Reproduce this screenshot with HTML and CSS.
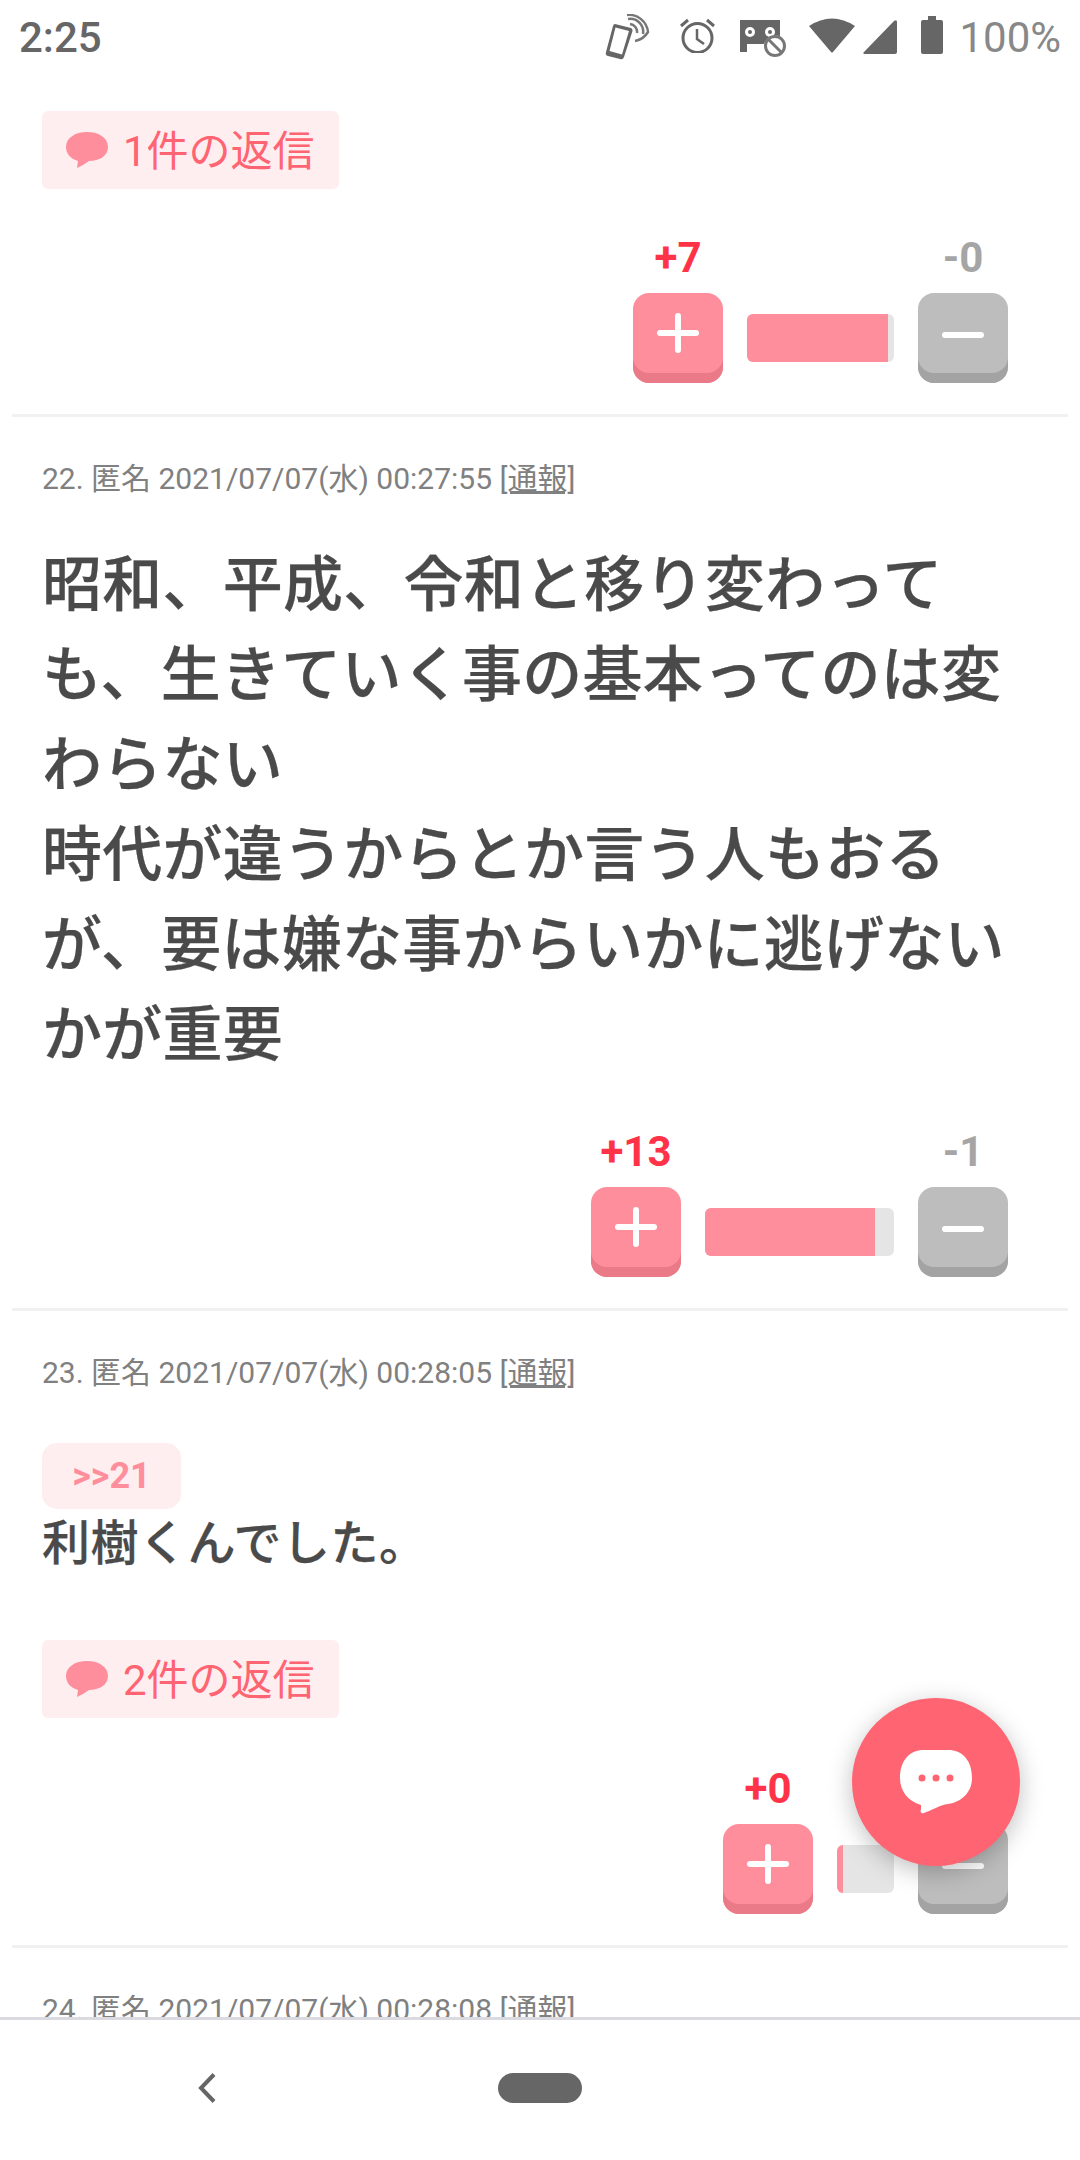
FILE: index.html
```html
<!DOCTYPE html>
<html>
<head>
  <title>コメント</title>
  <link rel="stylesheet" href="styles.css">
</head>

<body>
  <div class="phone">
    <div class="status-bar">
      <span class="time">2:25</span>
      <div class="status-icons">
        <svg class="icon-nfc" viewBox="0 0 45 47" width="45" height="47">
          <path d="M10 10 L26 14 Q28 15 27.500 17 L19 43 Q18 46 15 45 L3 42 Q0 41 1 38 L8 12 Q8.500 10 10 10 Z M10.500 13.500 L4.500 37 L17 40.500 L24 17 Z" fill="#666" fill-rule="evenodd"/>
          <path d="M23 5 A13 13 0 0 1 38 20 M22 1 A19 19 0 0 1 43 18 A19 19 0 0 1 30 27 M25 10 A8 8 0 0 1 32 19" fill="none" stroke="#777" stroke-width="2.500"/>
        </svg>
        <svg class="icon-alarm" viewBox="0 0 37 35" width="37" height="35">
          <circle cx="18.500" cy="20" r="14.500" fill="none" stroke="#666" stroke-width="3"/>
          <path d="M18 11 V21 L25 26" fill="none" stroke="#666" stroke-width="2.500"/>
          <path d="M2 8 L9 2 M35 8 L28 2" fill="none" stroke="#666" stroke-width="3"/>
        </svg>
        <svg class="icon-cast" viewBox="0 0 46 37" width="46" height="37">
          <path d="M0 0 H40 V16 A13 13 0 0 0 24 24 H7 V32 H0 Z" fill="#666"/>
          <circle cx="10" cy="12" r="5" fill="#fff"/>
          <circle cx="10" cy="12" r="2" fill="#666"/>
          <circle cx="30" cy="12" r="5" fill="#fff"/>
          <circle cx="30" cy="12" r="2" fill="#666"/>
          <circle cx="35" cy="26" r="9.500" fill="#fff" stroke="#777" stroke-width="3"/>
          <path d="M29 20 L41 32" stroke="#777" stroke-width="3"/>
        </svg>
        <svg class="icon-wifi" viewBox="0 0 46 36" width="46" height="36">
          <path d="M0 9 Q23 -6 46 9 L24 35 Q23 36 22 35 Z" fill="#666"/>
        </svg>
        <svg class="icon-signal" viewBox="0 0 34 34" width="34" height="34">
          <path d="M34 2 V32 Q34 34 32 34 H2 Q-1 34 1 32 L31 1 Q34 -1 34 2 Z" fill="#666"/>
        </svg>
        <svg class="icon-battery" viewBox="0 0 22 38" width="22" height="38">
          <path d="M7 0 H15 V4 H20 Q22 4 22 6 V36 Q22 38 20 38 H2 Q0 38 0 36 V6 Q0 4 2 4 H7 Z" fill="#666"/>
        </svg>
        <span class="battery-text">100%</span>
      </div>
    </div>

    <div class="comment-list">
      <div class="comment comment-first">
        <div class="reply-link">
          <svg class="bubble" viewBox="0 0 42 36" width="42" height="36"><path d="M21 0 C33 0 42 6 42 15 C42 24 33 29 23 29 C19 32 15 34 11 36 L12 29 C5 27 0 22 0 15 C0 6 9 0 21 0 Z"/></svg>
          <span class="reply-text">1件の返信</span>
        </div>
        <div class="vote vote-first">
          <div class="vote-col">
            <span class="count-plus">+7</span>
            <div class="vote-btn btn-plus"><span class="plus-sign"></span></div>
          </div>
          <div class="bar bar-small"><div class="bar-fill" style="width: 96%"></div></div>
          <div class="vote-col">
            <span class="count-minus">-0</span>
            <div class="vote-btn btn-minus"><span class="minus-sign"></span></div>
          </div>
        </div>
      </div>

      <div class="comment">
        <p class="comment-head">22. 匿名 2021/07/07(水) 00:27:55 <u>[通報]</u></p>
        <p class="comment-body big-text">昭和、平成、令和と移り変わっても、生きていく事の基本ってのは変わらない<br>時代が違うからとか言う人もおるが、要は嫌な事からいかに逃げないかが重要</p>
        <div class="vote">
          <div class="vote-col">
            <span class="count-plus">+13</span>
            <div class="vote-btn btn-plus"><span class="plus-sign"></span></div>
          </div>
          <div class="bar bar-large"><div class="bar-fill" style="width: 90%"></div></div>
          <div class="vote-col">
            <span class="count-minus">-1</span>
            <div class="vote-btn btn-minus"><span class="minus-sign"></span></div>
          </div>
        </div>
      </div>

      <div class="comment">
        <p class="comment-head">23. 匿名 2021/07/07(水) 00:28:05 <u>[通報]</u></p>
        <div class="anchor">&gt;&gt;21</div>
        <p class="comment-body small-text">利樹くんでした。</p>
        <div class="reply-link reply-link-second">
          <svg class="bubble" viewBox="0 0 42 36" width="42" height="36"><path d="M21 0 C33 0 42 6 42 15 C42 24 33 29 23 29 C19 32 15 34 11 36 L12 29 C5 27 0 22 0 15 C0 6 9 0 21 0 Z"/></svg>
          <span class="reply-text">2件の返信</span>
        </div>
        <div class="vote vote-third">
          <div class="vote-col">
            <span class="count-plus">+0</span>
            <div class="vote-btn btn-plus"><span class="plus-sign"></span></div>
          </div>
          <div class="bar bar-tiny"><div class="bar-fill" style="width: 10%"></div></div>
          <div class="vote-col">
            <span class="count-minus">-0</span>
            <div class="vote-btn btn-minus"><span class="minus-sign"></span></div>
          </div>
        </div>
      </div>

      <div class="comment">
        <p class="comment-head">24. 匿名 2021/07/07(水) 00:28:08 <u>[通報]</u></p>
      </div>
    </div>

    <div class="nav-bar">
      <svg class="nav-back" viewBox="0 0 18 30" width="18" height="30"><path d="M16 1.500 L3 15 L16 28.500" fill="none" stroke="#666" stroke-width="4"/></svg>
      <div class="nav-home"></div>
    </div>

    <div class="fab">
      <svg viewBox="0 0 72 64" width="72" height="64">
        <path d="M24 0 H48 C62 0 72 10 72 28 C72 42 62 52 48 54 C40 55 30 61 24 63 C21 64 20 62 21 59 L21 55 C8 51 0 41 0 28 C0 10 10 0 24 0 Z" fill="#fff"/>
        <circle cx="22" cy="28" r="3.500" fill="#ff6473"/>
        <circle cx="36" cy="28" r="3.500" fill="#ff6473"/>
        <circle cx="50" cy="28" r="3.500" fill="#ff6473"/>
      </svg>
    </div>
  </div>
</body>
</html>
```

FILE: styles.css
```css
body {
  margin: 0;
  padding: 0;
  background-color: #fff;
  font-family: Roboto, "Noto Sans CJK JP", sans-serif;
}

.phone {
  position: relative;
  display: flex;
  flex-direction: column;
  width: 1080px;
  height: 2160px;
  overflow: hidden;
}

.status-bar {
  display: flex;
  justify-content: space-between;
  align-items: center;
  height: 74px;
  padding: 0 19px;
  flex-shrink: 0;
}

.time {
  font-size: 42px;
  font-weight: 500;
  color: #666;
}

.status-icons {
  display: flex;
  align-items: center;
  height: 74px;
}

.icon-nfc {
  margin-right: 29px;
}

.icon-alarm {
  margin-right: 24px;
  margin-bottom: 3px;
}

.icon-cast {
  margin-right: 23px;
  margin-top: 3px;
}

.icon-wifi {
  margin-right: 8px;
  margin-bottom: 4px;
}

.icon-signal {
  margin-right: 24px;
}

.icon-battery {
  margin-bottom: 4px;
}

.battery-text {
  margin-left: 16px;
  font-size: 42px;
  color: #888;
}

.comment-list {
  flex: 1;
  overflow: hidden;
  padding: 0 12px;
}

.comment {
  padding: 0 30px;
  border-bottom: 3px solid #f1f1f1;
}

.comment:last-child {
  border-bottom: none;
}

.comment-first {
  padding-top: 37px;
}

.comment-head {
  margin: 0;
  padding-top: 42px;
  font-size: 30px;
  line-height: 40px;
  color: #808080;
}

.comment-body {
  margin: 0;
  color: #4a4a4a;
  font-weight: 500;
  -webkit-text-stroke: 0.25px #4a4a4a;
}

.big-text {
  margin-top: 42px;
  font-size: 60px;
  line-height: 90px;
  letter-spacing: 0.25px;
}

.small-text {
  margin-top: 2px;
  font-size: 48px;
  line-height: 66px;
  letter-spacing: 0.5px;
}

.reply-link {
  display: flex;
  align-items: center;
  width: 297px;
  height: 78px;
  box-sizing: border-box;
  padding-left: 24px;
  border-radius: 6px;
  background-color: #ffeef0;
  font-size: 42px;
  color: #ff6473;
}

.reply-text {
  margin-bottom: 5px;
}

.reply-link-second {
  margin-top: 63px;
}

.bubble {
  margin-right: 15px;
  fill: #ff8e9c;
}

.anchor {
  display: flex;
  justify-content: center;
  align-items: center;
  width: 139px;
  height: 66px;
  margin-top: 50px;
  border-radius: 15px;
  background-color: #ffeef0;
  font-size: 36px;
  font-weight: 700;
  color: #ff8e9c;
}

.vote {
  display: flex;
  justify-content: flex-end;
  align-items: flex-end;
  gap: 24px;
  margin-top: 48px;
  padding-bottom: 31px;
  padding-right: 30px;
}

.vote-first {
  margin-top: 46px;
}

.vote-third {
  margin-top: 48px;
}

.vote-col {
  display: flex;
  flex-direction: column;
  align-items: center;
  width: 90px;
}

.count-plus,
.count-minus {
  font-size: 42px;
  font-weight: 700;
  line-height: 46px;
  margin-bottom: 12px;
}

.count-plus {
  color: #ff3347;
}

.count-minus {
  color: #a5a5a5;
}

.vote-btn {
  position: relative;
  width: 90px;
  height: 90px;
  border-radius: 16px;
}

.btn-plus {
  background-color: #ff8e9c;
  box-shadow: inset 0 -10px 0 #ea7a88;
}

.btn-minus {
  background-color: #bdbdbd;
  box-shadow: inset 0 -10px 0 #a3a3a3;
}

/* the two strokes of + and - */
.plus-sign::before,
.minus-sign::before,
.plus-sign::after {
  content: "";
  position: absolute;
  background-color: #fff;
  border-radius: 3px;
}

.plus-sign::before {
  left: 24px;
  top: 37px;
  width: 42px;
  height: 6px;
}

.plus-sign::after {
  left: 42px;
  top: 20px;
  width: 6px;
  height: 40px;
}

.minus-sign::before {
  left: 24px;
  top: 39px;
  width: 42px;
  height: 6px;
}

.bar {
  height: 48px;
  margin-bottom: 21px;
  border-radius: 6px;
  background-color: #e5e5e5;
  overflow: hidden;
}

.bar-small {
  width: 147px;
}

.bar-large {
  width: 189px;
}

.bar-tiny {
  width: 57px;
}

.bar-fill {
  height: 100%;
  background-color: #ff8e9c;
}

.nav-bar {
  position: relative;
  display: flex;
  align-items: center;
  height: 140px;
  flex-shrink: 0;
  border-top: 3px solid #dadae0;
  background-color: #fff;
}

.nav-back {
  margin-left: 198px;
  margin-bottom: 4px;
}

.nav-home {
  width: 84px;
  height: 30px;
  margin-left: 282px;
  margin-bottom: 4px;
  border-radius: 15px;
  background-color: #666;
}

.fab {
  position: absolute;
  left: 852px;
  top: 1698px;
  display: flex;
  justify-content: center;
  align-items: center;
  width: 168px;
  height: 168px;
  border-radius: 50%;
  background-color: #ff6473;
  box-shadow: 0 6px 24px rgba(0, 0, 0, 0.25);
}
```
